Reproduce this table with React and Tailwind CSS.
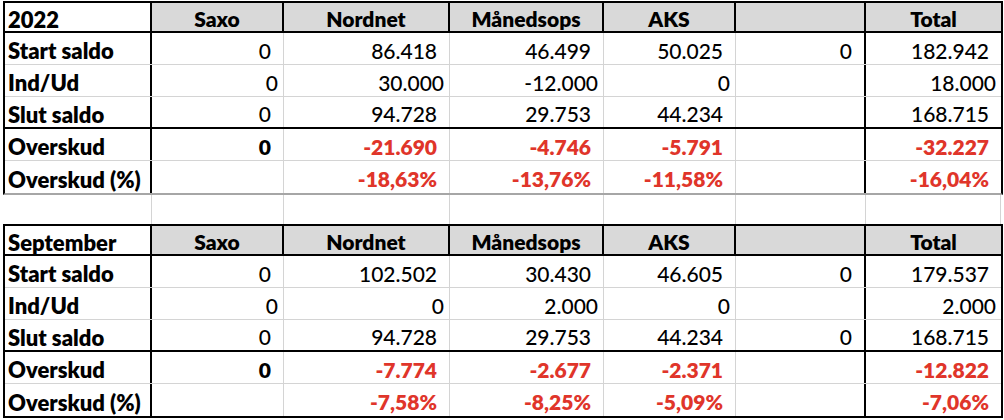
import React from 'react'

const cols = 'grid-cols-[147px_132px_166px_154px_132px_130px_135px]'

const heads = ['Saxo', 'Nordnet', 'Månedsops', 'AKS', '', 'Total']

const tables = [
  {
    title: '2022',
    last: 'border-b-2 border-b-[#a6a6a6]',
    rows: [
      ['Start saldo', ['0', '86.418', '46.499', '50.025', '0', '182.942']],
      ['Ind/Ud', ['0', '30.000', '-12.000', '0', '', '18.000'], 'tight'],
      ['Slut saldo', ['0', '94.728', '29.753', '44.234', '', '168.715']],
      ['Overskud', ['0', '-21.690', '-4.746', '-5.791', '', '-32.227'], 'red'],
      ['Overskud (%)', ['', '-18,63%', '-13,76%', '-11,58%', '', '-16,04%'], 'red'],
    ],
  },
  {
    title: 'September',
    last: 'border-b-2 border-b-black',
    rows: [
      ['Start saldo', ['0', '102.502', '30.430', '46.605', '0', '179.537']],
      ['Ind/Ud', ['0', '0', '2.000', '0', '', '2.000'], 'tight'],
      ['Slut saldo', ['0', '94.728', '29.753', '44.234', '0', '168.715']],
      ['Overskud', ['0', '-7.774', '-2.677', '-2.371', '', '-12.822'], 'red'],
      ['Overskud (%)', ['', '-7,58%', '-8,25%', '-5,09%', '', '-7,06%'], 'red'],
    ],
  },
]

function rightBorder(c) {
  if (c === 6) return ''
  if (c === 0 || c === 5) return 'border-r-2 border-r-black'
  return 'border-r border-r-[#d4d4d4]'
}

function Sheet({ t }) {
  return (
    <div className={`w-[1000px] border-x-2 border-t-2 border-black ${t.last}`}>
      <div className={`grid ${cols} h-[30px] border-b-2 border-b-black`}>
        <div className="flex items-center border-r-2 border-r-black pl-[3px] pt-[5px] text-[22px] font-extrabold">{t.title}</div>
        {heads.map((h, i) => (
          <div
            key={i}
            className={`flex items-center justify-center bg-[#d9d9d9] pt-[3px] font-extrabold ${i < 5 ? 'border-r-2 border-r-black' : ''}`}
          >
            {h}
          </div>
        ))}
      </div>
      {t.rows.map(([label, vals, kind], r) => {
        const bottom =
          r === 4 ? '' : r === 2 ? 'border-b-2 border-b-black' : 'border-b border-b-[#d4d4d4]'
        return (
          <div key={r} className={`grid ${cols} h-[32px] ${bottom}`}>
            <div className="flex items-center border-r-2 border-r-black pl-[3px] pt-[5px] text-[22px] font-extrabold">{label}</div>
            {vals.map((v, i) => {
              const c = i + 1
              let tone = ''
              if (kind === 'red') tone = i === 0 ? 'font-extrabold text-black' : 'font-extrabold text-[#e0352a]'
              const pad = kind === 'tight' ? 'pr-[5px]' : 'pr-[12px]'
              return (
                <div key={i} className={`flex items-center justify-end pt-[3px] ${pad} ${tone} ${rightBorder(c)}`}>
                  {v}
                </div>
              )
            })}
          </div>
        )
      })}
    </div>
  )
}

export default function App() {
  return (
    <div className="h-[420px] w-[1004px] overflow-hidden bg-white pl-[3px] pt-[1px] text-[21px] font-medium leading-none text-black [font-family:Lato,'Noto_Sans',sans-serif]">
      <Sheet t={tables[0]} />
      <div className={`grid ${cols} ml-[2px] h-[29px]`}>
        {[0, 1, 2, 3, 4, 5, 6].map((c) => (
          <div key={c} className="border-r border-r-[#d4d4d4]" />
        ))}
      </div>
      <Sheet t={tables[1]} />
    </div>
  )
}
